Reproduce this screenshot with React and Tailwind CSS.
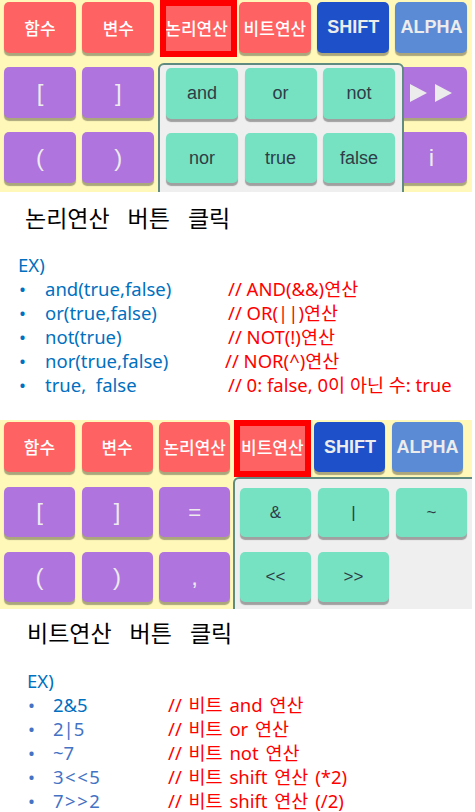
import React from "react";

const KO = "font-['Noto_Sans','Noto_Sans_CJK_KR',sans-serif]";
const ARIAL = "font-['Liberation_Sans','Noto_Sans_CJK_KR',sans-serif]";

const RED = "bg-[#ff6262] text-white text-[17px] font-medium font-['Noto_Sans_CJK_KR',sans-serif]";
const PURPLE = "bg-[#b074de] text-[#ececec] text-[24px] font-['Liberation_Sans',sans-serif]";
const TEAL = "bg-[#76e2c2] text-[#2e3d47] text-[18px] font-['Liberation_Sans',sans-serif]";

function Key({ tone, children, hl }) {
  return (
    <div className="relative">
      <div
        className={`h-full flex items-center justify-center rounded-[5px] shadow-[0_3px_1px_rgba(0,0,0,0.33)] whitespace-nowrap ${tone}`}
      >
        {children}
      </div>
      {hl && <div className={`absolute z-10 border-[6px] border-[#ff0000] ${hl}`} />}
    </div>
  );
}

function Triangles() {
  return (
    <svg width="46" height="20" viewBox="0 0 46 20">
      <path d="M2 1 L19 10 L2 19 Z" fill="#ececec" />
      <path d="M27 1 L44 10 L27 19 Z" fill="#ececec" />
    </svg>
  );
}

function TopRow({ hlIndex, hl }) {
  const labels = ["함수", "변수", "논리연산", "비트연산"];
  return (
    <>
      {labels.map((l, i) => (
        <Key key={l} tone={RED} hl={i === hlIndex ? hl : null}>{l}</Key>
      ))}
      <Key tone={`bg-[#1d50c9] text-[#ececec] text-[18px] font-bold ${ARIAL}`}>SHIFT</Key>
      <Key tone={`bg-[#5b8bd4] text-[#ececec] text-[18px] font-bold ${ARIAL}`}>ALPHA</Key>
    </>
  );
}

function LogicPanel() {
  return (
    <div className="relative w-[472px] h-[192px] bg-[#fff8b9] overflow-hidden">
      <div className="grid grid-cols-[repeat(6,72px)] grid-rows-[51px_51px_51px] gap-x-[6.3px] gap-y-[14px] pl-[4px] pt-[2px]">
        <TopRow hlIndex={2} hl="-left-[1px] -right-[4px] -top-[2px] -bottom-[4px]" />
        <Key tone={PURPLE}>[</Key>
        <Key tone={PURPLE}>]</Key>
        <Key tone={PURPLE} />
        <Key tone={PURPLE} />
        <Key tone={PURPLE} />
        <Key tone={PURPLE}><Triangles /></Key>
        <Key tone={PURPLE}>(</Key>
        <Key tone={PURPLE}>)</Key>
        <Key tone={PURPLE} />
        <Key tone={PURPLE} />
        <Key tone={PURPLE} />
        <Key tone={PURPLE}>i</Key>
      </div>

      {/* dropdown of 논리연산 */}
      <div className="absolute left-[158px] top-[63px] w-[246px] h-[150px] bg-[#efefef] border-2 border-[#5f8b80] rounded-t-[6px]">
        <div className="grid grid-cols-[repeat(3,72px)] grid-rows-[51px_50px] gap-x-[6.5px] gap-y-[14px] pl-[6px] pt-[3px]">
          {["and", "or", "not", "nor", "true", "false"].map(t => (
            <Key key={t} tone={TEAL}>{t}</Key>
          ))}
        </div>
      </div>
    </div>
  );
}

function BitPanel() {
  return (
    <div className="relative w-[472px] h-[189px] bg-[#fff8b9] overflow-hidden">
      <div className="grid grid-cols-[repeat(6,71px)] grid-rows-[50px_50px_50px] gap-x-[6.6px] gap-y-[15px] pl-[4px] pt-[2px]">
        <TopRow hlIndex={3} hl="-left-[3px] -right-[3px] -top-[2px] -bottom-[5px]" />
        <Key tone={PURPLE}>[</Key>
        <Key tone={PURPLE}>]</Key>
        <Key tone={`${PURPLE} !text-[22px]`}>=</Key>
        <Key tone={PURPLE} />
        <Key tone={PURPLE} />
        <Key tone={PURPLE} />
        <Key tone={PURPLE}>(</Key>
        <Key tone={PURPLE}>)</Key>
        <Key tone={PURPLE}>,</Key>
        <Key tone={PURPLE} />
        <Key tone={PURPLE} />
        <Key tone={PURPLE} />
      </div>

      {/* dropdown of 비트연산 */}
      <div className="absolute left-[233px] top-[57px] w-[250px] h-[150px] bg-[#efefef] border-2 border-[#5f8b80] rounded-tl-[6px]">
        <div className="grid grid-cols-[repeat(3,71px)] grid-rows-[49px_50px] gap-x-[7px] gap-y-[15px] pl-[5px] pt-[9px]">
          {["&", "|", "~", "<<", ">>"].map(t => (
            <Key key={t} tone={`${TEAL} !text-[17px]`}>{t}</Key>
          ))}
        </div>
      </div>
    </div>
  );
}

const logicLines = [
  { code: "and(true,false)", note: "// AND(&&)연산" },
  { code: "or(true,false)", note: "// OR(||)연산" },
  { code: "not(true)", note: "// NOT(!)연산" },
  { code: "nor(true,false)", note: "// NOR(^)연산", shift: "-ml-[3px]" },
  { code: "true,  false", note: "// 0: false, 0이 아닌 수: true" },
];

const bitLines = [
  { code: "2&5", note: "// 비트 and 연산", dark: true },
  { code: "2|5", note: "// 비트 or 연산" },
  { code: "~7", note: "// 비트 not 연산" },
  { code: "3<<5", note: "// 비트 shift 연산 (*2)", wide: true },
  { code: "7>>2", note: "// 비트 shift 연산 (/2)", wide: true },
];

export default function App() {
  return (
    <div className={`w-[475px] h-[812px] bg-white overflow-hidden ${KO}`}>
      <LogicPanel />

      <div className="pl-[18px] pt-[10px] h-[228px]">
        <h1 className="ml-[7px] text-[23px] leading-[32px] text-black [word-spacing:12px]">논리연산 버튼 클릭</h1>
        <p className="mt-[19px] text-[18.5px] leading-[24px] text-[#0070c0]">EX)</p>
        {logicLines.map(l => (
          <div key={l.code} className="flex text-[18.5px] leading-[24px] whitespace-pre">
            <span className="w-[27px] pl-[1px] text-[#0070c0]">•</span>
            <span className="w-[183px] text-[#0070c0]">{l.code}</span>
            <span className={`text-[#ff0000] ${l.shift ?? ""}`}>{l.note}</span>
          </div>
        ))}
      </div>

      <BitPanel />

      <div className="pl-[27px] pt-[8px]">
        <h1 className="text-[23px] leading-[32px] text-black [word-spacing:12px]">비트연산 버튼 클릭</h1>
        <p className="mt-[20px] text-[18.5px] leading-[24px] text-[#0070c0]">EX)</p>
        {bitLines.map(l => (
          <div key={l.code} className="flex text-[18.5px] leading-[24px] whitespace-pre">
            <span className="w-[26px] pl-[1px] text-[#4472c4]">•</span>
            <span className={`w-[115px] ${l.dark ? "text-[#0070c0]" : "text-[#4472c4]"} ${l.wide ? "tracking-[1.5px]" : ""}`}>{l.code}</span>
            <span className="text-[#ff0000] [word-spacing:2px]">{l.note}</span>
          </div>
        ))}
      </div>
    </div>
  );
}
